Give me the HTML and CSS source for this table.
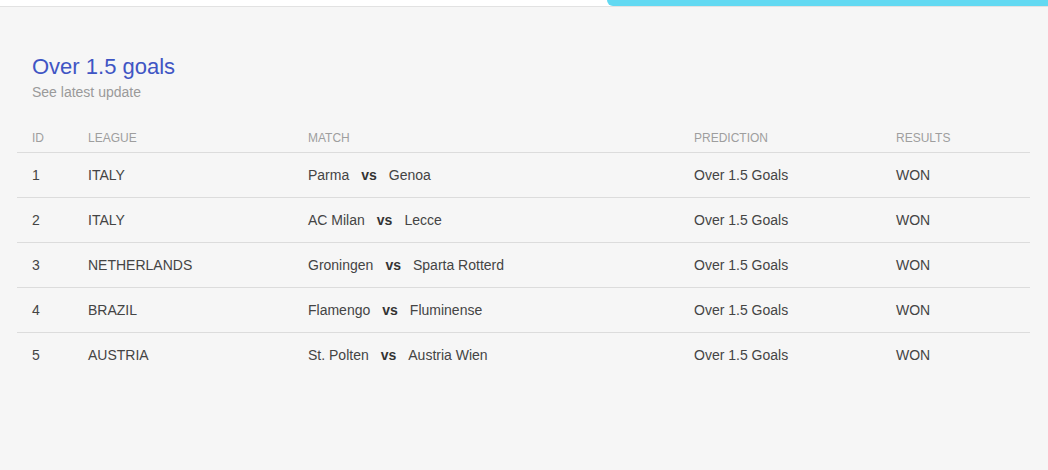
FILE: index.html
```html
<!DOCTYPE html>
<html lang="en">
<head>
  <meta charset="UTF-8" />
  <meta name="viewport" content="width=device-width, initial-scale=1" />
  <title>Over 1.5 goals</title>
  <link rel="stylesheet" href="styles.css">
</head>
<body>
  <div class="topbar">
    <div class="topbar__progress"></div>
  </div>

  <section class="tips">
    <h1 class="tips__title">Over 1.5 goals</h1>
    <p class="tips__sub">See latest update</p>

    <table class="tips__table">
      <colgroup>
        <col class="col-id">
        <col class="col-league">
        <col class="col-match">
        <col class="col-pred">
        <col class="col-res">
      </colgroup>
      <thead>
        <tr>
          <th>ID</th>
          <th>LEAGUE</th>
          <th>MATCH</th>
          <th>PREDICTION</th>
          <th>RESULTS</th>
        </tr>
      </thead>
      <tbody>
        <tr>
          <td>1</td>
          <td>ITALY</td>
          <td>Parma<span class="vs">vs</span>Genoa</td>
          <td>Over 1.5 Goals</td>
          <td>WON</td>
        </tr>
        <tr>
          <td>2</td>
          <td>ITALY</td>
          <td>AC Milan<span class="vs">vs</span>Lecce</td>
          <td>Over 1.5 Goals</td>
          <td>WON</td>
        </tr>
        <tr>
          <td>3</td>
          <td>NETHERLANDS</td>
          <td>Groningen<span class="vs">vs</span>Sparta Rotterd</td>
          <td>Over 1.5 Goals</td>
          <td>WON</td>
        </tr>
        <tr>
          <td>4</td>
          <td>BRAZIL</td>
          <td>Flamengo<span class="vs">vs</span>Fluminense</td>
          <td>Over 1.5 Goals</td>
          <td>WON</td>
        </tr>
        <tr>
          <td>5</td>
          <td>AUSTRIA</td>
          <td>St. Polten<span class="vs">vs</span>Austria Wien</td>
          <td>Over 1.5 Goals</td>
          <td>WON</td>
        </tr>
      </tbody>
    </table>
  </section>
</body>
</html>
```

FILE: styles.css
```css
body {
  margin: 0;
  font-family: 'Liberation Sans', Arial, sans-serif;
  background-color: #f6f6f6;
  color: #444;
}

/* bande du haut */
.topbar {
  height: 6px;
  background: #fff;
  border-bottom: 1px solid #e2e2e2;
  display: flex;
  justify-content: flex-end;
}
.topbar__progress {
  width: 441px;
  height: 6px;
  background: #62d9f2;
  border-bottom-left-radius: 6px;
}

/* bloc des pronostics */
.tips {
  padding: 47px 18px 0 17px;
}
.tips__title {
  margin: 0;
  padding-left: 15px;
  font-size: 22px;
  line-height: 26px;
  font-weight: normal;
  color: #3f55c4;
}
.tips__sub {
  margin: 2px 0 0;
  padding-left: 15px;
  font-size: 14px;
  line-height: 20px;
  color: #9a9a9a;
}

.tips__table {
  width: 100%;
  margin-top: 26px;
  border-collapse: collapse;
  table-layout: fixed;
}
.col-id { width: 56px; }
.col-league { width: 220px; }
.col-match { width: 386px; }
.col-pred { width: 202px; }
.col-res { width: 149px; }

.tips__table th {
  padding: 0 15px 4px;
  font-size: 12px;
  line-height: 20px;
  font-weight: normal;
  color: #9e9e9e;
  text-align: left;
  border-bottom: 1px solid #dcdcdc;
}
.tips__table td {
  padding: 12px 15px;
  font-size: 14px;
  line-height: 20px;
  white-space: nowrap;
  border-top: 1px solid #dcdcdc;
}
.tips__table tbody tr:first-child td {
  border-top: none;
}
.vs {
  font-weight: bold;
  color: #333;
  padding: 0 12px;
}
```
